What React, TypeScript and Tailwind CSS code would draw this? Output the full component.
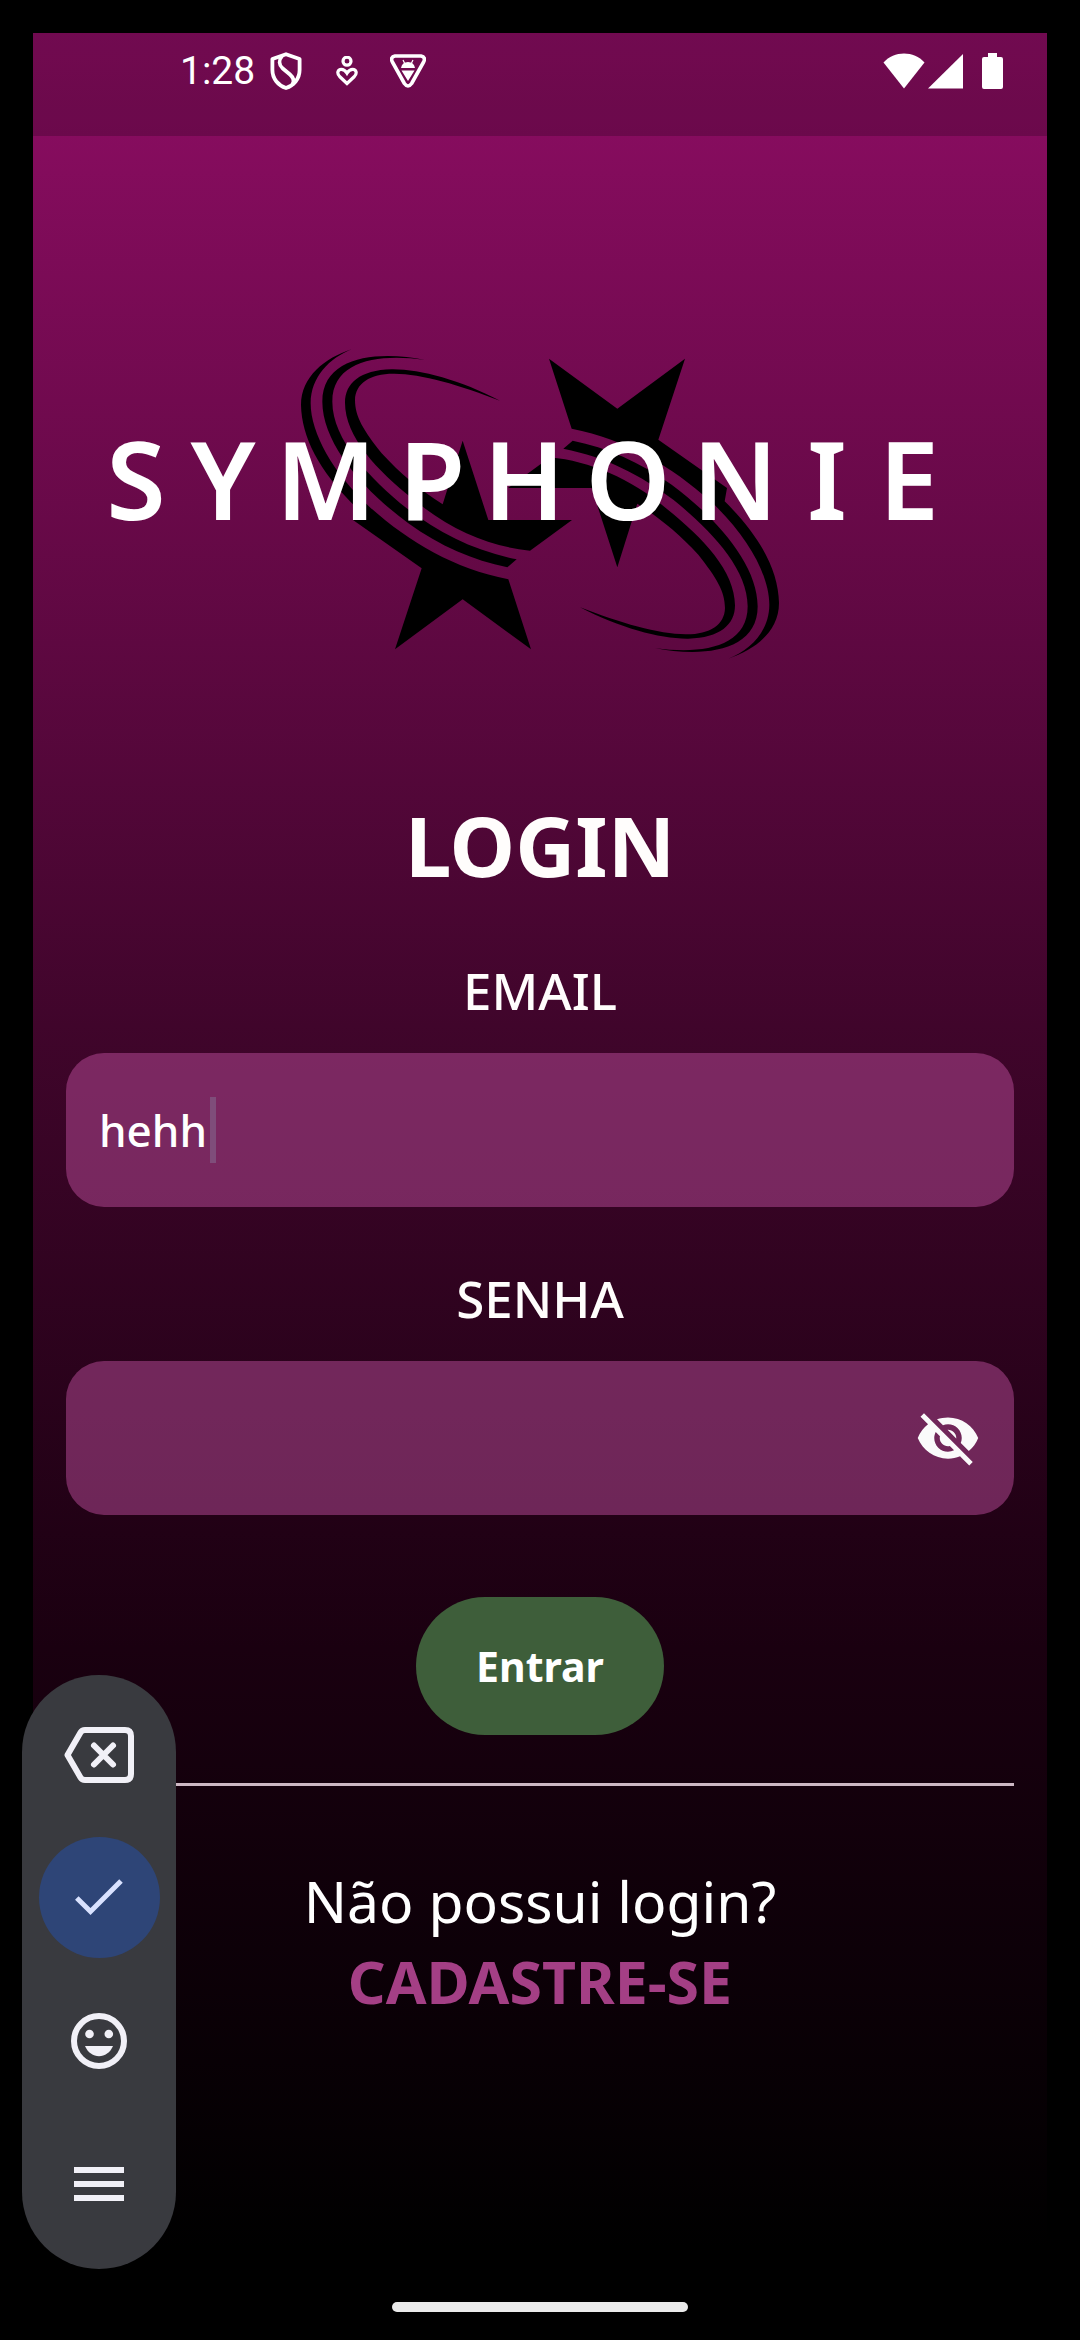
import { useState } from "react";
import { MdVisibility, MdVisibilityOff } from "react-icons/md";

const FONT = "font-['Noto_Sans','Open_Sans',sans-serif]";

function StatusBar() {
  return (
    <header className="h-[103px] bg-black/20 text-white">
      <div className="flex h-[76px] items-center justify-between pr-[44px] pl-[147px]">
        <div className="flex items-center">
          <span className="w-[90px] font-['Roboto',sans-serif] text-[39px] leading-[48px]">1:28</span>
          <svg viewBox="0 0 32 38" className="mr-[34px] h-[38px] w-[32px]" fill="none" stroke="currentColor" strokeWidth="3.8" strokeLinejoin="round">
            <path d="M16 2.2 L29.6 7 V18 C29.6 27 23.5 33.5 16 36 C8.5 33.5 2.4 27 2.4 18 V7 Z" />
            <path d="M12 4 C8.5 8 9 13 12.5 16.2 L20 22.5 C24 26 24.5 29 22.5 32.5" />
          </svg>
          <svg viewBox="0 0 22 30" className="mr-[32px] h-[30px] w-[22px]" fill="none" stroke="currentColor" strokeWidth="3.2">
            <circle cx="11" cy="5.2" r="4" />
            <path d="M11 27.5 L3.6 20.5 C0.5 17.3 1.8 13.4 5.3 13.4 C8 13.4 9.6 15 11 17.2 C12.4 15 14 13.4 16.7 13.4 C20.2 13.4 21.5 17.3 18.4 20.5 Z" />
          </svg>
          <svg viewBox="0 0 36 34" className="h-[34px] w-[36px]">
            <path d="M5 2 H31 Q36 3 33.6 8 L21.6 29.5 Q18 34.5 14.4 29.5 L2.4 8 Q0 3 5 2 Z" fill="none" stroke="currentColor" strokeWidth="3.6" strokeLinejoin="round" />
            <path d="M13 6 L14.5 9 M23 6 L21.5 9" stroke="currentColor" strokeWidth="1.2" />
            <path d="M11 14 Q12 8 18 8 Q24 8 25 14 Z M11.5 16.5 H24.5 L18 27 Z" fill="currentColor" />
          </svg>
        </div>
        <div className="flex items-center">
          <svg viewBox="0 0 42 36" className="mr-[3px] h-[36px] w-[42px]" fill="currentColor">
            <path d="M21 35.5 L0.5 9.5 C11 -2.6 31 -2.6 41.5 9.5 Z" />
          </svg>
          <svg viewBox="0 0 35 36" className="mr-[19px] h-[36px] w-[35px]" fill="currentColor">
            <path d="M35 1 V35.5 H0 Z" />
          </svg>
          <svg viewBox="0 0 21 36" className="h-[36px] w-[21px]" fill="currentColor">
            <path d="M6 0 H15 V4 H19 Q21 4 21 6 V34 Q21 36 19 36 H2 Q0 36 0 34 V6 Q0 4 2 4 H6 Z" />
          </svg>
        </div>
      </div>
    </header>
  );
}

function StarWithRings() {
  return (
    <g fill="#000">
      <path d="M815 58 C735 84 663 140 663 225 C665 320 715 420 826 530 L819 570 L1025 715 L945 958 L1148 808 L1353 958 L1285 748 C1120 715 985 635 868 530 C760 430 692 310 692 220 C692 140 750 84 815 58 Z" />
      <path d="M1035 90 C900 62 727 75 727 215 C727 340 850 480 985 580 C1080 648 1180 692 1282 712 L1310 688 C1180 662 1080 610 980 535 C870 445 757 330 757 215 C757 90 900 70 1035 90 Z" />
      <path d="M1260 212 C1140 150 1020 117 935 118 C840 120 795 160 795 218 C795 320 890 420 1000 508 C1110 600 1230 650 1350 662 L1476 570 H1225 L1148 332 L1088 523 C1020 480 960 430 905 370 C850 300 825 260 825 210 C826 160 870 131 940 131 C1020 130 1140 165 1260 212 Z" />
    </g>
  );
}

function Logo() {
  return (
    <svg viewBox="0 0 2760 1020" className="mx-[47px] mt-[194px]" role="img" aria-label="Symphonie">
      <StarWithRings />
      <g transform="rotate(180 1380 522)">
        <StarWithRings />
      </g>
      <text
        x="168 429 738 1056 1332 1644 1965 2241 2487"
        y="570"
        textAnchor="middle"
        className="fill-white font-['Noto_Sans',sans-serif] text-[324px] font-semibold"
      >
        SYMPHONIE
      </text>
    </svg>
  );
}

const fieldClass =
  "block h-[154px] w-full rounded-[38px] bg-[#ba4c99]/50 pl-[33px] text-[44px] font-medium text-white caret-transparent outline-none";
const labelClass = "text-center text-[51px] leading-[72px] font-medium text-[#fffdfc]";

function LoginForm() {
  const [email, setEmail] = useState("hehh");
  const [password, setPassword] = useState("");
  const [visible, setVisible] = useState(false);

  return (
    <form className="flex flex-col" onSubmit={(event) => event.preventDefault()}>
      <label htmlFor="email" className={`${labelClass} mt-[57px]`}>
        EMAIL
      </label>
      <div className="relative mt-[27px]">
        <input id="email" type="text" value={email} onChange={(event) => setEmail(event.target.value)} className={`${fieldClass} pr-[33px]`} />
        <span className="absolute top-[44px] left-[144px] h-[66px] w-[6px] bg-[#7f4d7a]" />
      </div>
      <label htmlFor="password" className={`${labelClass} mt-[55px]`}>
        SENHA
      </label>
      <div className="relative mt-[27px]">
        <input
          id="password"
          type={visible ? "text" : "password"}
          value={password}
          onChange={(event) => setPassword(event.target.value)}
          className={`${fieldClass} pr-[132px]`}
        />
        <button
          type="button"
          aria-label="Mostrar senha"
          onClick={() => setVisible(!visible)}
          className="absolute inset-y-0 right-[33px] flex items-center text-[66px] text-[#fafafa]"
        >
          {visible ? <MdVisibility /> : <MdVisibilityOff />}
        </button>
      </div>
      <button type="submit" className="mt-[82px] h-[138px] w-[248px] self-center rounded-full bg-[#3e5e3a] pt-[2px] text-[41px] font-bold text-white">
        Entrar
      </button>
    </form>
  );
}

function KeyboardToolbar() {
  const slot = "flex h-[121px] w-[121px] items-center justify-center rounded-full";
  return (
    <div className="absolute bottom-[71px] left-[22px] flex w-[154px] flex-col items-center gap-[22px] rounded-full bg-[#393a3f] pt-[19px] pb-[25px] text-[#f1f0f7]">
      <button type="button" aria-label="Apagar" className={slot}>
        <svg viewBox="0 0 70 56" className="h-[56px] w-[70px]" fill="none" stroke="currentColor" strokeWidth="6" strokeLinejoin="round">
          <path d="M21 3 H61 Q67 3 67 9 V47 Q67 53 61 53 H21 Q18 53 16.5 50.5 L3.5 28 L16.5 5.5 Q18 3 21 3 Z" />
          <path d="M30 18.5 L49 37.5 M49 18.5 L30 37.5" strokeLinecap="round" />
        </svg>
      </button>
      <button type="button" aria-label="Confirmar" className={`${slot} bg-[#2e4577] text-[#d9e2ff]`}>
        <svg viewBox="0 0 48 37" className="h-[37px] w-[48px]" fill="none" stroke="currentColor" strokeWidth="5">
          <path d="M1.8 19 L15.5 32.5 L46 2" />
        </svg>
      </button>
      <button type="button" aria-label="Emoji" className={slot}>
        <svg viewBox="0 0 56 56" className="h-[56px] w-[56px]" fill="currentColor">
          <circle cx="28" cy="28" r="25" fill="none" stroke="currentColor" strokeWidth="6" />
          <circle cx="18.5" cy="21" r="4.3" />
          <circle cx="37.8" cy="21" r="4.3" />
          <path d="M14 33 H42 C36.5 46.5 19.5 46.5 14 33 Z" />
        </svg>
      </button>
      <button type="button" aria-label="Menu" className={slot}>
        <svg viewBox="0 0 50 34" className="h-[34px] w-[50px]" fill="currentColor">
          <path d="M0 0 H50 V6 H0 Z M0 14 H50 V20 H0 Z M0 28 H50 V34 H0 Z" />
        </svg>
      </button>
    </div>
  );
}

export default function App() {
  return (
    <div className={`relative flex min-h-screen flex-col bg-black px-[33px] pt-[33px] ${FONT}`}>
      <div className="flex grow flex-col bg-[linear-gradient(180deg,#8e0d64_0%,#40052b_43%,#1a0010_70%,#000000_96%)]">
        <StatusBar />
        <Logo />
        <main className="flex flex-col px-[33px]">
          <h1 className="mt-[123px] text-center text-[83px] leading-[104px] font-bold text-[#fffdfc]">LOGIN</h1>
          <LoginForm />
          <hr className="mt-12 h-[3px] border-0 bg-[#cdb8c4]" />
          <p className="mt-[75px] text-center text-[57px] leading-[80px] text-white">Não possui login?</p>
          <a href="#cadastro" className="self-center text-[59px] leading-[80px] font-bold text-[#a43f85]">
            CADASTRE-SE
          </a>
        </main>
        <div className="mt-auto mb-[28px] h-[10px] w-[296px] self-center rounded-full bg-[#ebebeb]" />
      </div>
      <KeyboardToolbar />
    </div>
  );
}
